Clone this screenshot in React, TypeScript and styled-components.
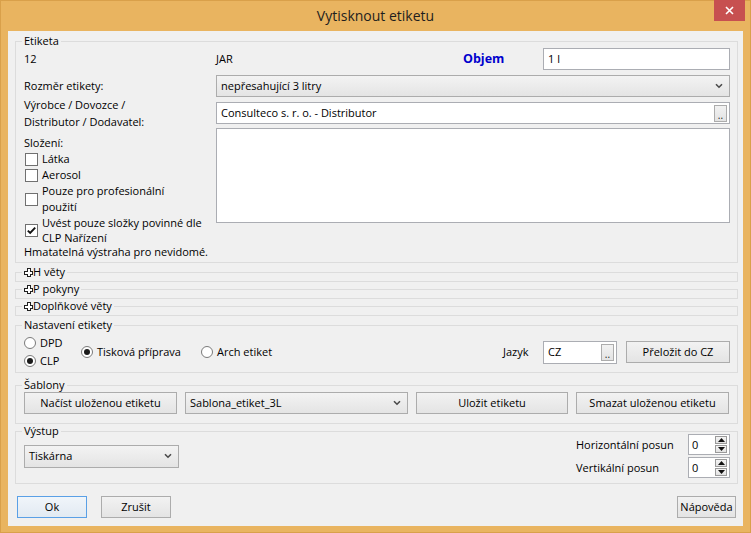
import React from "react";
import styled, { createGlobalStyle } from "styled-components";

const GlobalStyle = createGlobalStyle`
  html, body {
    margin: 0;
    padding: 0;
    background: #ffffff;
  }
  body {
    font-family: "Open Sans", "Segoe UI", sans-serif;
    font-size: 11px;
    line-height: 16px;
    color: #000000;
  }
  * {
    box-sizing: border-box;
  }
`;

const Window = styled.div`
  width: 751px;
  height: 533px;
  background: #e9b460;
  border: 1px solid #d9a04a;
  padding: 0 7px 7px 7px;
  display: flex;
  flex-direction: column;
`;

const TitleBar = styled.div`
  position: relative;
  flex-shrink: 0;
  height: 30px;
  margin: 0 -7px;
  display: flex;
  align-items: center;
  justify-content: center;
  font-size: 14px;
  color: #1e1e1e;
`;

const CloseButton = styled.div`
  position: absolute;
  top: -1px;
  right: 5px;
  width: 31px;
  height: 21px;
  background: #c75050;
  display: flex;
  align-items: center;
  justify-content: center;
`;

const Body = styled.div`
  flex: 1;
  background: #f0f0f0;
  padding: 0 5px 8px 7px;
  display: flex;
  flex-direction: column;
`;

const Group = styled.fieldset<{ $mt?: number; $pad?: string }>`
  flex-shrink: 0;
  margin: ${({ $mt = 0 }) => `${$mt}px 0 0 0`};
  padding: ${({ $pad = "0 7px 2px 8px" }) => $pad};
  border: 1px solid #dcdcdc;
  min-width: 0;
`;

const Legend = styled.legend`
  padding: 0 2px;
  margin-left: -2px;
  line-height: 14px;
  display: flex;
  align-items: center;
`;

const FormGrid = styled.div`
  display: grid;
  grid-template-columns: 192px 1fr;
  row-gap: 5px;
  align-items: center;
`;

const Cell = styled.div`
  display: flex;
  align-items: center;
`;

const Grow = styled.div`
  flex: 1;
`;

const BlueLabel = styled.div`
  width: 80px;
  font-size: 12.5px;
  font-weight: bold;
  color: #0000cd;
`;

const TwoLine = styled.div`
  line-height: 17px;
  margin: -6px 0;
`;

const TextBox = styled.div<{ $w?: number; $h?: number }>`
  width: ${({ $w }) => ($w ? `${$w}px` : "100%")};
  height: ${({ $h = 22 }) => $h}px;
  background: #ffffff;
  border: 1px solid #abadb3;
  padding: 0 2px 0 4px;
  display: flex;
  align-items: center;
  justify-content: space-between;
`;

const TextArea = styled.div`
  align-self: start;
  height: 95px;
  margin-top: -1px;
  background: #ffffff;
  border: 1px solid #abadb3;
`;

const Ellipsis = styled.div`
  width: 13px;
  height: 17px;
  border: 1px solid #acacac;
  background: linear-gradient(#f2f2f2, #e3e3e3);
  font-size: 10px;
  line-height: 18px;
  text-align: center;
  color: #222;
`;

const Combo = styled.div<{ $w?: number; $h?: number }>`
  width: ${({ $w }) => ($w ? `${$w}px` : "100%")};
  height: ${({ $h = 22 }) => $h}px;
  border: 1px solid #acacac;
  background: linear-gradient(#f3f3f3, #e4e4e4);
  padding: 0 6px 0 4px;
  display: flex;
  align-items: center;
  justify-content: space-between;
`;

const Button = styled.div<{ $w: number; $h?: number; $default?: boolean }>`
  width: ${({ $w }) => $w}px;
  height: ${({ $h = 22 }) => $h}px;
  border: 1px solid ${({ $default }) => ($default ? "#5aa0e6" : "#acacac")};
  background: ${({ $default }) =>
    $default
      ? "linear-gradient(#f0f5fa, #e2eaf2)"
      : "linear-gradient(#f2f2f2, #e4e4e4)"};
  display: flex;
  align-items: center;
  justify-content: center;
  flex-shrink: 0;
`;

const SideStack = styled.div`
  align-self: start;
  margin-top: 6px;
  display: flex;
  flex-direction: column;
`;

const CheckRow = styled.div`
  display: flex;
  align-items: center;
`;

const CheckText = styled.div<{ $lh?: number }>`
  margin-left: 4px;
  line-height: ${({ $lh = 16 }) => $lh}px;
`;

const Note = styled.div`
  line-height: 14px;
`;

const Box = styled.div`
  width: 13px;
  height: 13px;
  margin-left: 1px;
  border: 1px solid #707070;
  background: #ffffff;
  flex-shrink: 0;
  display: flex;
  align-items: center;
  justify-content: center;
`;

const Row = styled.div<{ $h?: number; $mt?: number }>`
  display: flex;
  align-items: center;
  height: ${({ $h }) => ($h ? `${$h}px` : "auto")};
  margin-top: ${({ $mt = 0 }) => $mt}px;
`;

const RadioStack = styled.div`
  width: 57px;
  display: flex;
  flex-direction: column;
`;

const RadioItem = styled.div<{ $w?: number }>`
  display: flex;
  align-items: center;
  height: 18px;
  width: ${({ $w }) => ($w ? `${$w}px` : "auto")};
`;

const Circle = styled.div<{ $on?: boolean }>`
  width: 12px;
  height: 12px;
  border-radius: 50%;
  border: 1px solid #7a7a7a;
  background: #ffffff;
  display: flex;
  align-items: center;
  justify-content: center;
  margin-right: 4px;

  &::after {
    content: "";
    display: ${({ $on }) => ($on ? "block" : "none")};
    width: 6px;
    height: 6px;
    border-radius: 50%;
    background: #1a1a1a;
  }
`;

const JazykLabel = styled.div`
  margin-left: auto;
  width: 40px;
`;

const SpinGrid = styled.div`
  margin-left: auto;
  display: grid;
  grid-template-columns: 112px 42px;
  row-gap: 2px;
  align-items: center;
`;

const SpinBox = styled.div`
  height: 21px;
  background: #ffffff;
  border: 1px solid #abadb3;
  padding: 0 2px 0 3px;
  display: flex;
  align-items: center;
  justify-content: space-between;
`;

const SpinArrows = styled.div`
  display: flex;
  flex-direction: column;
  gap: 1px;
`;

const SpinArrow = styled.div`
  width: 12px;
  height: 8px;
  border: 1px solid #9a9a9a;
  background: linear-gradient(#f4f4f4, #e2e2e2);
  display: flex;
  align-items: center;
  justify-content: center;
`;

const Footer = styled.div`
  flex-shrink: 0;
  margin-top: 12px;
  padding: 0 2px;
  display: flex;
  align-items: center;
`;

const Chevron = () => (
  <svg width="8" height="6" viewBox="0 0 8 6">
    <path d="M1 1.2 L4 4.2 L7 1.2" fill="none" stroke="#4a4a4a" strokeWidth="1.6" />
  </svg>
);

const Plus = () => (
  <svg width="9" height="9" viewBox="0 0 9 9">
    <path
      d="M3 0.5 H6 V3 H8.5 V6 H6 V8.5 H3 V6 H0.5 V3 H3 Z"
      fill="#ffffff"
      stroke="#202020"
      strokeWidth="1"
      shapeRendering="crispEdges"
    />
  </svg>
);

const Check = ({ on }: { on?: boolean }) => (
  <Box>
    {on && (
      <svg width="11" height="11" viewBox="0 0 11 11">
        <path d="M1.8 5.6 L4.2 8 L9.2 2.6" fill="none" stroke="#111" strokeWidth="1.9" />
      </svg>
    )}
  </Box>
);

const Tri = ({ up }: { up?: boolean }) => (
  <svg width="7" height="4" viewBox="0 0 7 4">
    <path d={up ? "M0 4 L3.5 0 L7 4 Z" : "M0 0 L3.5 4 L7 0 Z"} fill="#111" />
  </svg>
);

const Spin = () => (
  <SpinBox>
    <span>0</span>
    <SpinArrows>
      <SpinArrow>
        <Tri up />
      </SpinArrow>
      <SpinArrow>
        <Tri />
      </SpinArrow>
    </SpinArrows>
  </SpinBox>
);

const Expander = ({ title, mt }: { title: string; mt?: number }) => (
  <Group $mt={mt}>
    <Legend>
      <Plus />
      {title}
    </Legend>
  </Group>
);

export default function App() {
  return (
    <>
      <GlobalStyle />
      <Window>
        <TitleBar>
          Vytisknout etiketu
          <CloseButton>
            <svg width="9" height="9" viewBox="0 0 9 9">
              <path d="M1 1 L8 8 M8 1 L1 8" stroke="#ffffff" strokeWidth="1.6" />
            </svg>
          </CloseButton>
        </TitleBar>
        <Body>
          <Group $mt={3} $pad="0 7px 3px 8px">
            <Legend>Etiketa</Legend>
            <FormGrid>
              <div>12</div>
              <Cell>
                <Grow>JAR</Grow>
                <BlueLabel>Objem</BlueLabel>
                <TextBox $w={187}>1 l</TextBox>
              </Cell>

              <div>Rozměr etikety:</div>
              <Combo>
                <span>nepřesahující 3 litry</span>
                <Chevron />
              </Combo>

              <TwoLine>
                Výrobce / Dovozce /
                <br />
                Distributor / Dodavatel:
              </TwoLine>
              <TextBox>
                <span>Consulteco s. r. o. - Distributor</span>
                <Ellipsis>..</Ellipsis>
              </TextBox>

              <SideStack>
                <div>Složení:</div>
                <CheckRow>
                  <Check />
                  <CheckText>Látka</CheckText>
                </CheckRow>
                <CheckRow>
                  <Check />
                  <CheckText>Aerosol</CheckText>
                </CheckRow>
                <CheckRow>
                  <Check />
                  <CheckText>
                    Pouze pro profesionální
                    <br />
                    použití
                  </CheckText>
                </CheckRow>
                <CheckRow>
                  <Check on />
                  <CheckText $lh={15}>
                    Uvést pouze složky povinné dle
                    <br />
                    CLP Nařízení
                  </CheckText>
                </CheckRow>
                <Note>Hmatatelná výstraha pro nevidomé.</Note>
              </SideStack>
              <TextArea />
            </FormGrid>
          </Group>

          <Expander title="H věty" mt={2} />
          <Expander title="P pokyny" />
          <Expander title="Doplňkové věty" />

          <Group $mt={2} $pad="2px 7px 2px 8px">
            <Legend>Nastavení etikety</Legend>
            <Row $h={36}>
              <RadioStack>
                <RadioItem>
                  <Circle />
                  DPD
                </RadioItem>
                <RadioItem>
                  <Circle $on />
                  CLP
                </RadioItem>
              </RadioStack>
              <RadioItem $w={120}>
                <Circle $on />
                Tisková příprava
              </RadioItem>
              <RadioItem>
                <Circle />
                Arch etiket
              </RadioItem>
              <JazykLabel>Jazyk</JazykLabel>
              <TextBox $w={74} $h={23}>
                <span>CZ</span>
                <Ellipsis>..</Ellipsis>
              </TextBox>
              <Button $w={104} style={{ marginLeft: 9 }}>
                Přeložit do CZ
              </Button>
            </Row>
          </Group>

          <Group $mt={5} $pad="0 8px 9px 8px">
            <Legend>Šablony</Legend>
            <Row style={{ justifyContent: "space-between" }}>
              <Button $w={153}>Načíst uloženou etiketu</Button>
              <Combo $w={223}>
                <span>Sablona_etiket_3L</span>
                <Chevron />
              </Combo>
              <Button $w={152}>Uložit etiketu</Button>
              <Button $w={153}>Smazat uloženou etiketu</Button>
            </Row>
          </Group>

          <Group $mt={0} $pad="0 7px 5px 8px">
            <Legend>Výstup</Legend>
            <Row $h={44} $mt={-4}>
              <Combo $w={155} $h={23}>
                <span>Tiskárna</span>
                <Chevron />
              </Combo>
              <SpinGrid>
                <div>Horizontální posun</div>
                <Spin />
                <div>Vertikální posun</div>
                <Spin />
              </SpinGrid>
            </Row>
          </Group>

          <Footer>
            <Button $w={70} $h={22} $default>
              Ok
            </Button>
            <Button $w={70} $h={22} style={{ marginLeft: 14 }}>
              Zrušit
            </Button>
            <Button $w={59} $h={22} style={{ marginLeft: "auto" }}>
              Nápověda
            </Button>
          </Footer>
        </Body>
      </Window>
    </>
  );
}
